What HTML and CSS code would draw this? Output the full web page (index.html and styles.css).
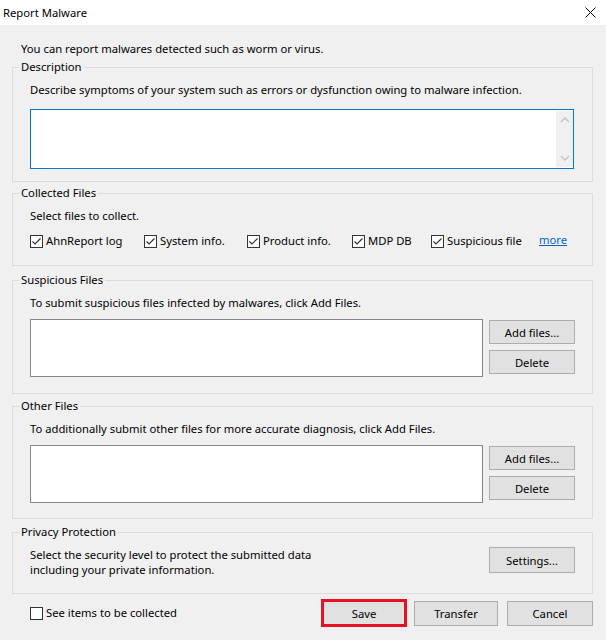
FILE: index.html
```html
<!DOCTYPE html>
<html lang="en">
<head>
    <meta charset="UTF-8">
    <meta name="viewport" content="width=device-width, initial-scale=1.0">
    <title>Report Malware</title>
    <link rel="stylesheet" href="styles.css">
</head>
<body>
    <div class="titlebar">
        <span class="title">Report Malware</span>
        <svg class="close" width="11" height="11" viewBox="0 0 11 11">
            <path d="M0.5 0.5L10.5 10.5M10.5 0.5L0.5 10.5" stroke="#000" stroke-width="1" fill="none"/>
        </svg>
    </div>

    <div class="dialog">
        <p class="intro">You can report malwares detected such as worm or virus.</p>

        <fieldset class="group group-desc">
            <legend>Description</legend>
            <div class="group-body">
                <p class="hint">Describe symptoms of your system such as errors or dysfunction owing to malware infection.</p>
                <div class="memo">
                    <div class="vscroll">
                        <svg width="10" height="6" viewBox="0 0 10 6"><path d="M1 5L5 1L9 5" stroke="#c2c2c2" stroke-width="1.3" fill="none"/></svg>
                        <svg width="10" height="6" viewBox="0 0 10 6"><path d="M1 1L5 5L9 1" stroke="#c2c2c2" stroke-width="1.3" fill="none"/></svg>
                    </div>
                </div>
            </div>
        </fieldset>

        <fieldset class="group group-collected">
            <legend>Collected Files</legend>
            <div class="group-body">
                <p class="hint">Select files to collect.</p>
                <div class="checks">
                    <label class="check-item"><span class="box"><svg width="11" height="11" viewBox="0 0 11 11"><path d="M1.5 5.5L4 8L9.5 2.5" stroke="#333" stroke-width="1.2" fill="none"/></svg></span>AhnReport log</label>
                    <label class="check-item"><span class="box"><svg width="11" height="11" viewBox="0 0 11 11"><path d="M1.5 5.5L4 8L9.5 2.5" stroke="#333" stroke-width="1.2" fill="none"/></svg></span>System info.</label>
                    <label class="check-item"><span class="box"><svg width="11" height="11" viewBox="0 0 11 11"><path d="M1.5 5.5L4 8L9.5 2.5" stroke="#333" stroke-width="1.2" fill="none"/></svg></span>Product info.</label>
                    <label class="check-item"><span class="box"><svg width="11" height="11" viewBox="0 0 11 11"><path d="M1.5 5.5L4 8L9.5 2.5" stroke="#333" stroke-width="1.2" fill="none"/></svg></span>MDP DB</label>
                    <label class="check-item"><span class="box"><svg width="11" height="11" viewBox="0 0 11 11"><path d="M1.5 5.5L4 8L9.5 2.5" stroke="#333" stroke-width="1.2" fill="none"/></svg></span>Suspicious file</label>
                    <a class="more" href="#">more</a>
                </div>
            </div>
        </fieldset>

        <fieldset class="group group-suspicious">
            <legend>Suspicious Files</legend>
            <div class="group-body">
                <p class="hint">To submit suspicious files infected by malwares, click Add Files.</p>
                <div class="file-row">
                    <div class="file-list"></div>
                    <div class="file-buttons">
                        <button class="btn">Add files...</button>
                        <button class="btn">Delete</button>
                    </div>
                </div>
            </div>
        </fieldset>

        <fieldset class="group group-other">
            <legend>Other Files</legend>
            <div class="group-body">
                <p class="hint">To additionally submit other files for more accurate diagnosis, click Add Files.</p>
                <div class="file-row">
                    <div class="file-list"></div>
                    <div class="file-buttons">
                        <button class="btn">Add files...</button>
                        <button class="btn">Delete</button>
                    </div>
                </div>
            </div>
        </fieldset>

        <fieldset class="group group-privacy">
            <legend>Privacy Protection</legend>
            <div class="group-body privacy-row">
                <p class="privacy-text">Select the security level to protect the submitted data<br>including your private information.</p>
                <button class="btn btn-settings">Settings...</button>
            </div>
        </fieldset>

        <div class="footer">
            <label class="check-item"><span class="box"></span>See items to be collected</label>
            <div class="actions">
                <button class="btn btn-save">Save</button>
                <button class="btn btn-transfer">Transfer</button>
                <button class="btn btn-cancel">Cancel</button>
            </div>
        </div>
    </div>
</body>
</html>
```

FILE: styles.css
```css
body {
    margin: 0;
    padding: 0;
    background-color: #f0f0f0;
    font-family: "Noto Sans", "Open Sans", sans-serif;
    font-size: 11.25px;
    line-height: 16px;
    color: #000;
}

p {
    margin: 0;
}

.titlebar {
    height: 25px;
    background-color: #fff;
    display: flex;
    align-items: center;
    justify-content: space-between;
    padding: 0 10px 0 3px;
}

.close {
    display: block;
}

.dialog {
    padding: 16px 13px 0 12px;
}

.intro {
    margin: 0 0 2px 9px;
}

.group {
    margin: 0;
    padding: 0 0 0 6px;
    border: 1px solid #dcdcdc;
    min-width: 0;
}

.group legend {
    padding: 0 2px;
    line-height: 16px;
}

.group-body {
    padding: 7px 17px 16px 11px;
}

.group-desc .group-body {
    padding-bottom: 12px;
}
.group-collected {
    margin-top: 3px;
}
.group-suspicious {
    margin-top: 6px;
}
.group-other {
    margin-top: 4px;
}
.group-other .group-body {
    padding-bottom: 15px;
}
.group-privacy {
    margin-top: 5px;
}

.memo {
    margin: 11px 1px 0 0;
    height: 58px;
    border: 1px solid #0078d7;
    background-color: #fff;
    display: flex;
    justify-content: flex-end;
}

.vscroll {
    width: 17px;
    margin: 1px 0;
    background-color: #f0f0f0;
    display: flex;
    flex-direction: column;
    justify-content: space-between;
    align-items: center;
    padding: 6px 0;
}

.vscroll svg {
    display: block;
}

.checks {
    margin-top: 9px;
    display: grid;
    grid-template-columns: 114px 103px 105px 79px 108px auto;
    align-items: center;
}

.check-item {
    display: flex;
    align-items: center;
    white-space: nowrap;
}

.box {
    width: 11px;
    height: 11px;
    border: 1px solid #333;
    background-color: #fff;
    margin-right: 3px;
    flex: none;
}

.box svg {
    display: block;
}

.more {
    color: #0066cc;
    text-decoration: underline;
    margin-top: -2px;
}

.file-row {
    margin-top: 8px;
    display: flex;
    align-items: flex-start;
}

.file-list {
    flex: 1;
    height: 56px;
    border: 1px solid #828790;
    background-color: #fff;
}

.file-buttons {
    margin-left: 6px;
    padding-top: 1px;
    display: flex;
    flex-direction: column;
    gap: 6px;
}

.btn {
    width: 86px;
    height: 24px;
    padding: 0;
    background-color: #e1e1e1;
    border: 1px solid #adadad;
    border-radius: 0;
    font-family: "Noto Sans", "Open Sans", sans-serif;
    font-size: 11.25px;
    color: #000;
}

.privacy-row {
    display: flex;
    justify-content: space-between;
    align-items: flex-start;
    padding-bottom: 16px;
}

.privacy-text {
    line-height: 15px;
}

.btn-settings {
    height: 26px;
}

.footer {
    display: flex;
    align-items: center;
    justify-content: space-between;
    padding: 5px 0 0 18px;
}

.actions {
    display: flex;
    align-items: center;
}

.btn-save {
    height: 28px;
    border: 3px solid #e81123;
}

.btn-transfer {
    width: 84px;
    height: 25px;
    margin-left: 7px;
}

.btn-cancel {
    height: 25px;
    margin-left: 9px;
}
```
